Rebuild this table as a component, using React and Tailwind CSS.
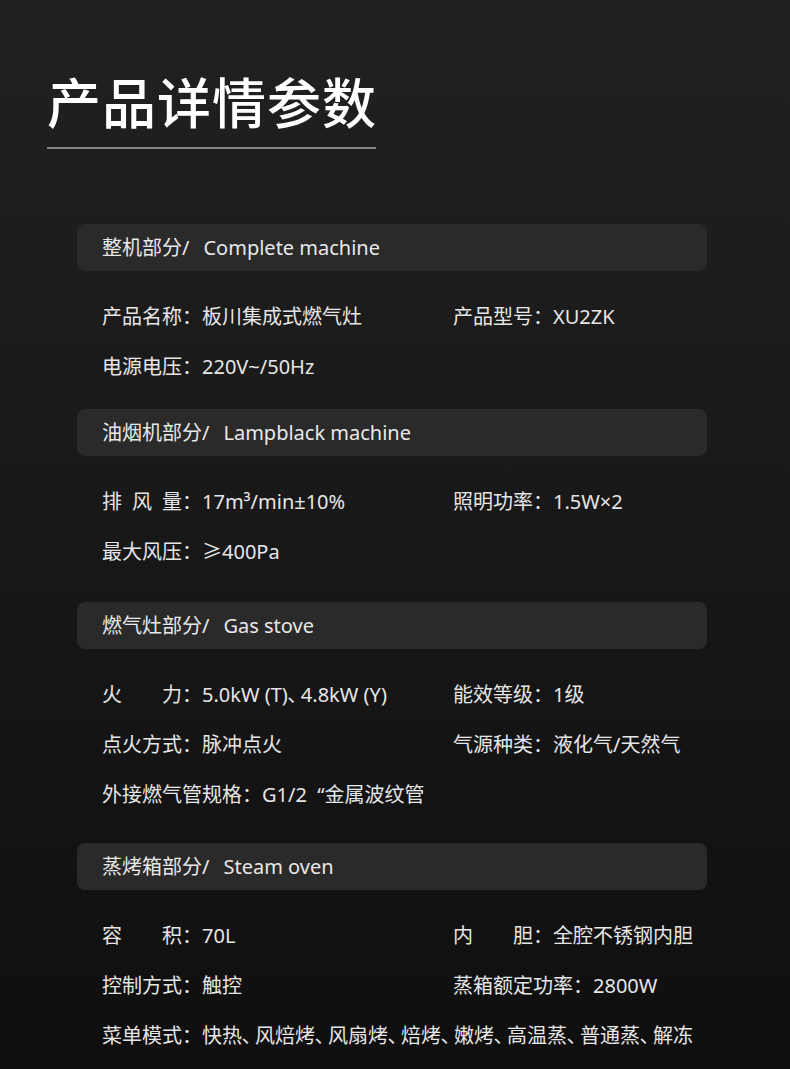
const F = { fontFamily: '"Noto Sans", "Noto Sans CJK SC", sans-serif' };

function Label({ text, spread }) {
  if (spread) {
    return (
      <span className="inline-flex w-[80px] justify-between">
        {text.split("").map((c, i) => (
          <span key={i}>{c}</span>
        ))}
      </span>
    );
  }
  return <span>{text}</span>;
}

function Value({ value }) {
  const parts = value.split("、");
  return (
    <span className="flex items-center">
      {parts.map((p, i) => (
        <span key={i} className="flex items-center">
          <span>{p}</span>
          {i < parts.length - 1 && <span className="mr-[3px]">､</span>}
        </span>
      ))}
    </span>
  );
}

function Item({ label, value, spread }) {
  return (
    <div className="flex items-center whitespace-pre">
      <Label text={label} spread={spread} />
      <span>：</span>
      <Value value={value} />
    </div>
  );
}

function Section({ zh, en, rows, pb }) {
  return (
    <div>
      <div className="flex h-[47px] items-center rounded-[8px] bg-[#2a2a2a] pl-[25px] text-[20px] text-[#e8e8e8]">
        <span>{zh}/</span>
        <span className="ml-[14px]">{en}</span>
      </div>
      <div className={`flex flex-col pt-[21px] ${pb}`}>
        {rows.map((r, i) => (
          <div key={i} className="grid h-[50px] grid-cols-[351px_1fr] items-center pl-[25px] text-[20px] text-[#e6e6e6]">
            {r.map((c, j) => (c ? <Item key={j} {...c} /> : <div key={j} />))}
          </div>
        ))}
      </div>
    </div>
  );
}

const sections = [
  {
    zh: "整机部分",
    en: "Complete machine",
    pb: "pb-[17px]",
    rows: [
      [
        { label: "产品名称", value: "板川集成式燃气灶" },
        { label: "产品型号", value: "XU2ZK" },
      ],
      [{ label: "电源电压", value: "220V~/50Hz" }, null],
    ],
  },
  {
    zh: "油烟机部分",
    en: "Lampblack machine",
    pb: "pb-[25px]",
    rows: [
      [
        { label: "排风量", value: "17m³/min±10%", spread: true },
        { label: "照明功率", value: "1.5W×2" },
      ],
      [{ label: "最大风压", value: "≥400Pa" }, null],
    ],
  },
  {
    zh: "燃气灶部分",
    en: "Gas stove",
    pb: "pb-[23px]",
    rows: [
      [
        { label: "火力", value: "5.0kW (T)、4.8kW (Y)", spread: true },
        { label: "能效等级", value: "1级" },
      ],
      [
        { label: "点火方式", value: "脉冲点火" },
        { label: "气源种类", value: "液化气/天然气" },
      ],
      [{ label: "外接燃气管规格", value: "G1/2  “金属波纹管" }, null],
    ],
  },
  {
    zh: "蒸烤箱部分",
    en: "Steam oven",
    pb: "pb-[20px]",
    rows: [
      [
        { label: "容积", value: "70L", spread: true },
        { label: "内胆", value: "全腔不锈钢内胆", spread: true },
      ],
      [
        { label: "控制方式", value: "触控" },
        { label: "蒸箱额定功率", value: "2800W" },
      ],
      [{ label: "菜单模式", value: "快热、风焙烤、风扇烤、焙烤、嫩烤、高温蒸、普通蒸、解冻" }, null],
    ],
  },
];

export default function App() {
  return (
    <div
      className="h-[1069px] w-[790px] overflow-hidden bg-gradient-to-b from-[#212121] to-[#0f0f0f]"
      style={F}
    >
      <div className="pl-[47px] pt-[70px]">
        <h1 className="text-[54px] leading-[66px] font-medium tracking-[1px] text-white">产品详情参数</h1>
        <div className="mt-[11px] h-[2px] w-[329px] bg-[#858585]" />
      </div>
      <div className="ml-[77px] mt-[75px] flex w-[630px] flex-col">
        {sections.map((s, i) => (
          <Section key={i} {...s} />
        ))}
      </div>
    </div>
  );
}
